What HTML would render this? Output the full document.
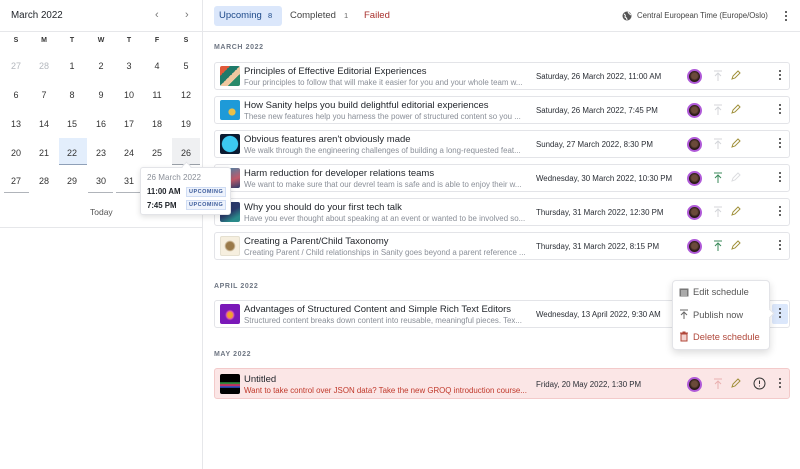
<!DOCTYPE html>
<html><head><meta charset="utf-8"><style>
*{box-sizing:border-box;margin:0;padding:0}
body{width:800px;height:469px;overflow:hidden;background:#fff;font-family:"Liberation Sans",sans-serif;color:#1f2329;position:relative}
.a{position:absolute}
.cal div{position:absolute;width:28px;text-align:center;font-size:9px;color:#333}
.card{position:absolute;left:214px;width:576px;height:28px;border:1px solid #e3e4e8;border-radius:3px;background:#fff}
.card .th{position:absolute;left:5px;top:3px;width:20px;height:20px;border-radius:2px}
.card .t{position:absolute;left:29px;top:3px;font-size:9.5px;color:#1f2329;white-space:nowrap}
.card .s{position:absolute;left:29px;top:15px;font-size:7.9px;color:#8a8f98;white-space:nowrap}
.card .d{position:absolute;left:321px;top:9px;font-size:7.9px;color:#2a2e35;white-space:nowrap}
.card .av{position:absolute;left:472px;top:6px;width:15px;height:15px;border-radius:50%;background:radial-gradient(circle at 50% 45%,#6b4a3a 0 35%,#2a1a18 60%);border:2px solid #b05ad8}
.card .dots{position:absolute;left:564px;top:7px;width:3px}
.dots i{display:block;width:2px;height:2px;background:#333;border-radius:1px;margin-bottom:2px}
.hd{position:absolute;left:214px;font-size:7px;letter-spacing:.6px;color:#6e7683;font-weight:bold}
</style></head><body>
<div class="a" style="left:202px;top:0;width:1px;height:469px;background:#e6e7ea"></div>
<div class="a" style="left:0;top:31px;width:800px;height:1px;background:#e6e7ea"></div>
<div class="a" style="left:11px;top:10px;font-size:9.8px;color:#1f2329">March 2022</div>
<div class="a" style="left:155px;top:9px;font-size:11px;color:#777">‹</div>
<div class="a" style="left:185px;top:9px;font-size:11px;color:#777">›</div>
<div class="a" style="left:59px;top:138px;width:28px;height:27px;background:#e3eefc"></div>
<div class="a" style="left:59px;top:164px;width:28px;height:1px;background:#8fa0b8"></div>
<div class="a" style="left:172px;top:138px;width:28px;height:27px;background:#eff0f2"></div>
<div class="a" style="left:172px;top:164px;width:28px;height:1px;background:#9aa0a8"></div>
<div class="a" style="left:4px;top:192px;width:25px;height:1px;background:#b0b4ba"></div>
<div class="a" style="left:88px;top:192px;width:25px;height:1px;background:#b0b4ba"></div>
<div class="a" style="left:116px;top:192px;width:25px;height:1px;background:#b0b4ba"></div>
<div class="cal">
<div style="left:2px;top:37px;font-size:7px;font-weight:bold">S</div><div style="left:30px;top:37px;font-size:7px;font-weight:bold">M</div><div style="left:58px;top:37px;font-size:7px;font-weight:bold">T</div><div style="left:87px;top:37px;font-size:7px;font-weight:bold">W</div><div style="left:115px;top:37px;font-size:7px;font-weight:bold">T</div><div style="left:143px;top:37px;font-size:7px;font-weight:bold">F</div><div style="left:172px;top:37px;font-size:7px;font-weight:bold">S</div>
<div style="left:2px;top:61px;color:#b4b8be">27</div><div style="left:30px;top:61px;color:#b4b8be">28</div><div style="left:58px;top:61px">1</div><div style="left:87px;top:61px">2</div><div style="left:115px;top:61px">3</div><div style="left:143px;top:61px">4</div><div style="left:172px;top:61px">5</div>
<div style="left:2px;top:90px">6</div><div style="left:30px;top:90px">7</div><div style="left:58px;top:90px">8</div><div style="left:87px;top:90px">9</div><div style="left:115px;top:90px">10</div><div style="left:143px;top:90px">11</div><div style="left:172px;top:90px">12</div>
<div style="left:2px;top:119px">13</div><div style="left:30px;top:119px">14</div><div style="left:58px;top:119px">15</div><div style="left:87px;top:119px">16</div><div style="left:115px;top:119px">17</div><div style="left:143px;top:119px">18</div><div style="left:172px;top:119px">19</div>
<div style="left:2px;top:148px">20</div><div style="left:30px;top:148px">21</div><div style="left:58px;top:148px">22</div><div style="left:87px;top:148px">23</div><div style="left:115px;top:148px">24</div><div style="left:143px;top:148px">25</div><div style="left:172px;top:148px">26</div>
<div style="left:2px;top:176px">27</div><div style="left:30px;top:176px">28</div><div style="left:58px;top:176px">29</div><div style="left:87px;top:176px">30</div><div style="left:115px;top:176px">31</div>
</div>
<div class="a" style="left:90px;top:207px;font-size:8.5px;color:#555">Today</div>
<div class="a" style="left:0;top:227px;width:202px;height:1px;background:#e6e7ea"></div>

<div class="a" style="left:214px;top:6px;width:68px;height:20px;background:#dbe7fb;border-radius:3px"></div>
<div class="a" style="left:219px;top:10px;font-size:9.5px;color:#1e4a8a">Upcoming</div>
<div class="a" style="left:268px;top:11px;font-size:7.5px;color:#1e4a8a">8</div>
<div class="a" style="left:290px;top:10px;font-size:9.5px;color:#444">Completed</div>
<div class="a" style="left:344px;top:11px;font-size:7.5px;color:#666">1</div>
<div class="a" style="left:364px;top:10px;font-size:9.5px;color:#a8302c">Failed</div>
<svg class="a" style="left:622px;top:11px" width="10" height="10" viewBox="0 0 10 10"><circle cx="5" cy="5" r="4.5" fill="#555"/><path d="M2 3 Q4 4 3 6 Q5 7 5 9 M6 1 Q7 3 9 4" stroke="#fff" stroke-width="1" fill="none"/></svg>
<div class="a" style="left:637px;top:11px;font-size:7.8px;color:#444">Central European Time (Europe/Oslo)</div>
<div class="a dots" style="left:785px;top:11px"><i></i><i></i><i></i></div>

<div class="hd" style="top:44px">MARCH 2022</div>
<div class="hd" style="top:283px">APRIL 2022</div>
<div class="hd" style="top:351px">MAY 2022</div>

<div class="card" style="top:62px"><div class="th" style="background:linear-gradient(135deg,#e05a3a 0 25%,#1f7a6a 25% 50%,#f0c8a0 50% 70%,#2a8a6a 70%)"></div><div class="t">Principles of Effective Editorial Experiences</div><div class="s">Four principles to follow that will make it easier for you and your whole team w...</div><div class="d">Saturday, 26 March 2022, 11:00 AM</div><div class="av"></div>
<svg class="a" style="left:498px;top:7px" width="10" height="12"><path d="M1 1H9M5 11V3M2 6L5 3L8 6" stroke="#d4d6da" fill="none"/></svg><svg class="a" style="left:515px;top:7px" width="11" height="11"><path d="M2 9L3 6L8 1L10 3L5 8Z" stroke="#a0903a" fill="none"/></svg><div class="dots"><i></i><i></i><i></i></div></div>

<div class="card" style="top:96px"><div class="th" style="background:radial-gradient(circle at 60% 60%,#e8c048 0 20%,transparent 22%),#1e9ad8"></div><div class="t">How Sanity helps you build delightful editorial experiences</div><div class="s">These new features help you harness the power of structured content so you ...</div><div class="d">Saturday, 26 March 2022, 7:45 PM</div><div class="av"></div>
<svg class="a" style="left:498px;top:7px" width="10" height="12"><path d="M1 1H9M5 11V3M2 6L5 3L8 6" stroke="#d4d6da" fill="none"/></svg><svg class="a" style="left:515px;top:7px" width="11" height="11"><path d="M2 9L3 6L8 1L10 3L5 8Z" stroke="#a0903a" fill="none"/></svg><div class="dots"><i></i><i></i><i></i></div></div>

<div class="card" style="top:130px"><div class="th" style="background:radial-gradient(circle,#3cc8f0 0 55%,#0a1a30 60%)"></div><div class="t">Obvious features aren't obviously made</div><div class="s">We walk through the engineering challenges of building a long-requested feat...</div><div class="d">Sunday, 27 March 2022, 8:30 PM</div><div class="av"></div>
<svg class="a" style="left:498px;top:7px" width="10" height="12"><path d="M1 1H9M5 11V3M2 6L5 3L8 6" stroke="#d4d6da" fill="none"/></svg><svg class="a" style="left:515px;top:7px" width="11" height="11"><path d="M2 9L3 6L8 1L10 3L5 8Z" stroke="#a0903a" fill="none"/></svg><div class="dots"><i></i><i></i><i></i></div></div>

<div class="card" style="top:164px"><div class="th" style="background:linear-gradient(160deg,#3a8ab0,#c05a6a 60%,#2a3a6a)"></div><div class="t">Harm reduction for developer relations teams</div><div class="s">We want to make sure that our devrel team is safe and is able to enjoy their w...</div><div class="d">Wednesday, 30 March 2022, 10:30 PM</div><div class="av"></div>
<svg class="a" style="left:498px;top:7px" width="10" height="12"><path d="M1 1H9M5 11V3M2 6L5 3L8 6" stroke="#3a8a5a" fill="none"/></svg><svg class="a" style="left:515px;top:7px" width="11" height="11"><path d="M2 9L3 6L8 1L10 3L5 8Z" stroke="#dcdde0" fill="none"/></svg><div class="dots"><i></i><i></i><i></i></div></div>

<div class="card" style="top:198px"><div class="th" style="background:linear-gradient(150deg,#2a3a6a 0 50%,#2a8a8a 80%)"></div><div class="t">Why you should do your first tech talk</div><div class="s">Have you ever thought about speaking at an event or wanted to be involved so...</div><div class="d">Thursday, 31 March 2022, 12:30 PM</div><div class="av"></div>
<svg class="a" style="left:498px;top:7px" width="10" height="12"><path d="M1 1H9M5 11V3M2 6L5 3L8 6" stroke="#d4d6da" fill="none"/></svg><svg class="a" style="left:515px;top:7px" width="11" height="11"><path d="M2 9L3 6L8 1L10 3L5 8Z" stroke="#a0903a" fill="none"/></svg><div class="dots"><i></i><i></i><i></i></div></div>

<div class="card" style="top:232px"><div class="th" style="background:radial-gradient(circle,#9a7a4a 0 30%,#f6efdf 45%);border:1px solid #e5e0d0"></div><div class="t">Creating a Parent/Child Taxonomy</div><div class="s">Creating Parent / Child relationships in Sanity goes beyond a parent reference ...</div><div class="d">Thursday, 31 March 2022, 8:15 PM</div><div class="av"></div>
<svg class="a" style="left:498px;top:7px" width="10" height="12"><path d="M1 1H9M5 11V3M2 6L5 3L8 6" stroke="#3a8a5a" fill="none"/></svg><svg class="a" style="left:515px;top:7px" width="11" height="11"><path d="M2 9L3 6L8 1L10 3L5 8Z" stroke="#a0903a" fill="none"/></svg><div class="dots"><i></i><i></i><i></i></div></div>

<div class="card" style="top:300px"><div class="th" style="background:radial-gradient(ellipse at 50% 55%,#f0a030 0 18%,#e05ab0 25%,transparent 35%),#7a18b8"></div><div class="t">Advantages of Structured Content and Simple Rich Text Editors</div><div class="s">Structured content breaks down content into reusable, meaningful pieces. Tex...</div><div class="d">Wednesday, 13 April 2022, 9:30 AM</div>
<div class="a" style="left:557px;top:3px;width:16px;height:20px;background:#dbe7fb;border-radius:2px"></div><div class="dots"><i></i><i></i><i></i></div></div>

<div class="card" style="top:368px;height:31px;background:#fbe6e6;border-color:#f3caca"><div class="th" style="top:5px;background:linear-gradient(180deg,#000 0 40%,#2a8a3a 42% 48%,#c03060 52% 60%,#3050c0 62% 68%,#000 70%)"></div><div class="t" style="top:5px">Untitled</div><div class="s" style="top:17px;color:#c0392b">Want to take control over JSON data? Take the new GROQ introduction course...</div><div class="d" style="top:11px">Friday, 20 May 2022, 1:30 PM</div><div class="av" style="top:8px"></div>
<svg class="a" style="left:498px;top:9px" width="10" height="12"><path d="M1 1H9M5 11V3M2 6L5 3L8 6" stroke="#eab0b0" fill="none"/></svg><svg class="a" style="left:515px;top:9px" width="11" height="11"><path d="M2 9L3 6L8 1L10 3L5 8Z" stroke="#a0903a" fill="none"/></svg>
<svg class="a" style="left:538px;top:8px" width="13" height="13"><circle cx="6.5" cy="6.5" r="5.5" stroke="#333" fill="none"/><path d="M6.5 3.5V7M6.5 8.5V9.5" stroke="#333"/></svg><div class="dots" style="top:9px"><i></i><i></i><i></i></div></div>

<div class="a" style="left:140px;top:167px;width:91px;height:48px;background:#fff;border:1px solid #e3e4e8;border-radius:3px;box-shadow:0 2px 6px rgba(0,0,0,.12)"></div>
<div class="a" style="left:183px;top:163px;width:7px;height:7px;background:#fff;border-left:1px solid #e3e4e8;border-top:1px solid #e3e4e8;transform:rotate(45deg)"></div>
<div class="a" style="left:147px;top:173px;font-size:8.1px;color:#8a8f98">26 March 2022</div>
<div class="a" style="left:147px;top:187px;font-size:7.8px;font-weight:bold;color:#1f2329">11:00 AM</div>
<div class="a" style="left:147px;top:201px;font-size:7.8px;font-weight:bold;color:#1f2329">7:45 PM</div>
<div class="a" style="left:186px;top:187px;font-size:5.5px;letter-spacing:.5px;font-weight:bold;color:#3a5a9a;background:#eef3fc;border:1px solid #d0ddf4;padding:1px 2px">UPCOMING</div>
<div class="a" style="left:186px;top:200px;font-size:5.5px;letter-spacing:.5px;font-weight:bold;color:#3a5a9a;background:#eef3fc;border:1px solid #d0ddf4;padding:1px 2px">UPCOMING</div>

<div class="a" style="left:672px;top:280px;width:98px;height:70px;background:#fff;border:1px solid #e3e4e8;border-radius:4px;box-shadow:0 3px 8px rgba(0,0,0,.14)"></div>
<div class="a" style="left:766px;top:310px;width:7px;height:7px;background:#fff;border-right:1px solid #e3e4e8;border-top:1px solid #e3e4e8;transform:rotate(45deg)"></div>
<svg class="a" style="left:679px;top:287px" width="10" height="10"><rect x="0.5" y="1.5" width="9" height="8" fill="#777"/><path d="M2 4H8M2 6H8M2 8H8" stroke="#fff" stroke-width=".8"/></svg>
<div class="a" style="left:693px;top:287px;font-size:9.3px;color:#555">Edit schedule</div>
<svg class="a" style="left:679px;top:309px" width="10" height="11"><path d="M1 1H9M5 10V3M2 6L5 3L8 6" stroke="#666" fill="none"/></svg>
<div class="a" style="left:693px;top:310px;font-size:9.3px;color:#555">Publish now</div>
<svg class="a" style="left:679px;top:331px" width="10" height="11"><path d="M1 2H9M3.5 1H6.5M2 3H8V10H2Z" stroke="#b0473a" fill="#f3d3cf"/></svg>
<div class="a" style="left:693px;top:332px;font-size:9.3px;color:#b0473a">Delete schedule</div>
</body></html>
